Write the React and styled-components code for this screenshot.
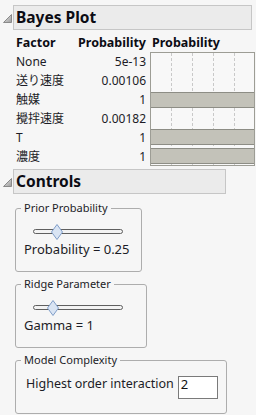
import React from "react";
import styled, { createGlobalStyle } from "styled-components";

const Global = createGlobalStyle`
  html, body { margin: 0; padding: 0; background: #f6f6f6; }
  body {
    font-family: "Noto Sans", "Noto Sans CJK JP", sans-serif;
    color: #1c1c26;
    -webkit-font-smoothing: antialiased;
  }
`;

const Page = styled.div`
  width: 256px;
  height: 415px;
  padding-top: 5px;
  box-sizing: border-box;
  overflow: hidden;
`;

const OutlineHead = styled.div`
  display: flex;
  align-items: center;
  margin-top: ${(p) => p.$mt || 0}px;
`;

const TriangleBox = styled.svg`
  width: 9px;
  height: 9px;
  margin-left: 3px;
  margin-right: 1px;
  margin-top: 2px;
  flex: none;
`;

const HeaderBox = styled.div`
  box-sizing: border-box;
  width: ${(p) => p.$width}px;
  height: 25px;
  border: 1px solid #c6c6c6;
  background: #ebebeb;
  padding-left: 2px;
  font-weight: 700;
  font-size: 15.5px;
  line-height: 22px;
  color: #0c0c14;
  white-space: nowrap;
`;

const Table = styled.div`
  display: grid;
  grid-template-columns: 56px 70px 105px;
  column-gap: 4px;
  grid-auto-rows: 19px;
  margin: 3px 0 0 16px;
  font-size: 12px;
  line-height: 19px;
`;

const HeadCell = styled.div`
  font-weight: 700;
  font-size: 12.5px;
  white-space: nowrap;
  text-align: ${(p) => (p.$right ? "right" : "left")};
  padding-left: ${(p) => (p.$pad ? 2 : 0)}px;
  color: #0c0c14;
`;

const LabelCell = styled.div`
  grid-column: 1;
  white-space: nowrap;
`;

const ValueCell = styled.div`
  grid-column: 2;
  text-align: right;
  white-space: nowrap;
`;

const Plot = styled.div`
  grid-column: 3;
  grid-row: 2 / span 6;
  box-sizing: border-box;
  border: 1px solid #9d9d95;
  display: flex;
  flex-direction: column;
  background-color: #f8f8f8;
  background-image:
    linear-gradient(to bottom, transparent 3px, #f8f8f8 3px),
    linear-gradient(to right, transparent 20px, #c9c9c9 20px);
  background-size: 100% 5px, 21px 100%;
  background-repeat: repeat, repeat-x;
`;

const PlotRow = styled.div`
  flex: 1;
  display: flex;
  flex-direction: column;
  justify-content: center;
  padding: 1px 0;
  box-sizing: border-box;
`;

const Bar = styled.div`
  height: 16px;
  box-sizing: border-box;
  background: #c3c2b9;
  border-top: 1px solid #8d8d85;
  border-bottom: 1px solid #8d8d85;
`;

const ControlsBody = styled.div`
  margin-left: 15px;
  display: flex;
  flex-direction: column;
  align-items: flex-start;
`;

const GroupBox = styled.fieldset`
  box-sizing: border-box;
  width: ${(p) => p.$width}px;
  min-inline-size: 0;
  margin: ${(p) => p.$mt}px 0 0 0;
  padding: 0 0 14px 0;
  border: 1px solid #adadad;
  border-radius: 3px;
`;

const Legend = styled.legend`
  font-size: 11px;
  line-height: 14px;
  padding: 0 3px;
  margin-left: 5px;
  color: #1c1c26;
`;

const SliderRow = styled.div`
  display: flex;
  align-items: center;
  height: 16px;
  margin-top: 8px;
  padding-left: 17px;
`;

const Track = styled.div`
  position: relative;
  box-sizing: border-box;
  width: 90px;
  height: 5px;
  border: 1px solid #5f5f5f;
  border-radius: 3px;
  background: #f3f3f3;
`;

const Thumb = styled.svg`
  position: absolute;
  top: -6px;
  width: 12px;
  height: 16px;
`;

const ValueText = styled.div`
  margin: 2px 0 0 8px;
  font-size: 13px;
  line-height: 16px;
  white-space: nowrap;
`;

const InteractionRow = styled.div`
  display: flex;
  align-items: flex-start;
  gap: 4px;
  margin: 9px 0 0 10px;
`;

const InteractionLabel = styled.span`
  font-size: 12.5px;
  line-height: 16px;
  white-space: nowrap;
`;

const NumberBox = styled.div`
  box-sizing: border-box;
  width: 40px;
  height: 23px;
  border: 1px solid #7a7a7a;
  background: #ffffff;
  padding-left: 2px;
  font-size: 13px;
  line-height: 15px;
  color: #111;
`;

function Triangle() {
  return (
    <TriangleBox viewBox="0 0 9 9">
      <defs>
        <linearGradient id="tg" x1="0" y1="0" x2="1" y2="1">
          <stop offset="0" stopColor="#eeeeee" />
          <stop offset="1" stopColor="#9a9a9a" />
        </linearGradient>
      </defs>
      <polygon points="8.5,0.5 8.5,8.5 0.5,8.5" fill="url(#tg)" stroke="#8a8a8a" strokeWidth="1" strokeLinejoin="round" />
    </TriangleBox>
  );
}

function Slider({ left }) {
  return (
    <SliderRow>
      <Track>
        <Thumb viewBox="0 0 12 16" style={{ left: `${left}px` }}>
          <polygon points="6,0.5 11.5,8 6,15.5 0.5,8" fill="#d9e4f3" stroke="#7f9dc8" strokeWidth="1" />
        </Thumb>
      </Track>
    </SliderRow>
  );
}

const rows = [
  { name: "None", value: "5e-13", p: 0 },
  { name: "送り速度", value: "0.00106", p: 0 },
  { name: "触媒", value: "1", p: 1 },
  { name: "攪拌速度", value: "0.00182", p: 0 },
  { name: "T", value: "1", p: 1 },
  { name: "濃度", value: "1", p: 1 },
];

export default function App() {
  return (
    <Page>
      <Global />
      <OutlineHead>
        <Triangle />
        <HeaderBox $width={239}>Bayes Plot</HeaderBox>
      </OutlineHead>
      <Table>
        <HeadCell>Factor</HeadCell>
        <HeadCell $right>Probability</HeadCell>
        <HeadCell $pad>Probability</HeadCell>
        {rows.map((r) => (
          <React.Fragment key={r.name}>
            <LabelCell>{r.name}</LabelCell>
            <ValueCell>{r.value}</ValueCell>
          </React.Fragment>
        ))}
        <Plot>
          {rows.map((r) => (
            <PlotRow key={r.name}>{r.p > 0 && <Bar />}</PlotRow>
          ))}
        </Plot>
      </Table>
      <OutlineHead $mt={3}>
        <Triangle />
        <HeaderBox $width={213}>Controls</HeaderBox>
      </OutlineHead>
      <ControlsBody>
        <GroupBox $width={127} $mt={7}>
          <Legend>Prior Probability</Legend>
          <Slider left={17} />
          <ValueText>Probability = 0.25</ValueText>
        </GroupBox>
        <GroupBox $width={132} $mt={5}>
          <Legend>Ridge Parameter</Legend>
          <Slider left={13} />
          <ValueText>Gamma = 1</ValueText>
        </GroupBox>
        <GroupBox $width={212} $mt={5}>
          <Legend>Model Complexity</Legend>
          <InteractionRow>
            <InteractionLabel>Highest order interaction</InteractionLabel>
            <NumberBox>2</NumberBox>
          </InteractionRow>
        </GroupBox>
      </ControlsBody>
    </Page>
  );
}
